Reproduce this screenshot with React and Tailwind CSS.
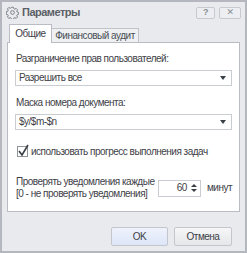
import React from 'react';

const font = { fontFamily: '"Liberation Sans", "DejaVu Sans", sans-serif' };

const GearIcon = () => (
  <svg width="13" height="13" viewBox="0 0 16 16" className="text-[#7a7f87]">
    <path
      fill="none"
      stroke="currentColor"
      strokeWidth="1.2"
      d="M6.8 1.5h2.4l.4 1.8 1.3.6 1.6-1 1.7 1.7-1 1.6.6 1.3 1.8.4v2.4l-1.8.4-.6 1.3 1 1.6-1.7 1.7-1.6-1-1.3.6-.4 1.8H6.8l-.4-1.8-1.3-.6-1.6 1-1.7-1.7 1-1.6-.6-1.3-1.8-.4V6.8l1.8-.4.6-1.3-1-1.6 1.7-1.7 1.6 1 1.3-.6z"
    />
    <circle cx="8" cy="8" r="2.3" fill="none" stroke="currentColor" strokeWidth="1.2" />
  </svg>
);

const Select = ({ value }) => (
  <div className="flex items-center justify-between h-[16px] border border-[#c9ccd1] bg-white pl-[3px] pr-[5px]">
    <span>{value}</span>
    <span className="w-0 h-0 border-l-[3px] border-r-[3px] border-t-[4px] border-l-transparent border-r-transparent border-t-[#3a3f46]" />
  </div>
);

export default function App() {
  return (
    <div
      className="w-[247px] h-[253px] bg-[#e9eaee] border-[2px] border-[#b4b8be] flex flex-col text-[10px] tracking-[-0.5px] text-[#3e4147] leading-none"
      style={font}
    >
      <div className="flex items-center h-[21px] pl-[4px] pr-[4px]">
        <GearIcon />
        <span className="ml-[3px] font-bold text-[11px] text-[#5b5f66]">Параметры</span>
        <div className="ml-auto flex gap-[4px]">
          <div className="w-[19px] h-[12px] rounded-[2px] border border-[#c6c9ce] bg-[#eceef1] flex items-center justify-center text-[9px] font-bold text-[#8a8e95]">?</div>
          <div className="w-[22px] h-[12px] rounded-[2px] border border-[#c6c9ce] bg-[#eceef1] flex items-center justify-center text-[9px] font-bold text-[#8a8e95]">✕</div>
        </div>
      </div>

      <div className="flex items-end pl-[7px] h-[19px]">
        <div className="h-[19px] w-[43px] bg-white border border-b-0 border-[#b9bdc3] flex items-center justify-center relative top-[1px]">Общие</div>
        <div className="h-[14px] w-[87px] bg-[#eef0f2] border border-l-0 border-b-0 border-[#c1c4c9] flex items-center justify-center text-[#4a4e55]">Финансовый аудит</div>
      </div>

      <div className="mx-[5px] h-[170px] bg-white border border-[#b9bdc3] px-[7px] pt-[11px] flex flex-col">
        <div className="pl-[1px]">Разграничение прав пользователей:</div>
        <div className="mt-[6px]"><Select value="Разрешить все" /></div>
        <div className="mt-[12px] pl-[1px]">Маска номера документа:</div>
        <div className="mt-[6px]"><Select value="$y/$m-$n" /></div>
        <div className="mt-[16px] flex items-center pl-[2px]">
          <span className="w-[11px] h-[11px] shrink-0 border border-[#8f949b] bg-white relative">
            <svg width="13" height="13" viewBox="0 0 13 13" className="absolute left-[-1px] top-[-3px]">
              <path d="M2 7l3 4 6-10" fill="none" stroke="#3a3f46" strokeWidth="1.6" />
            </svg>
          </span>
          <span className="ml-[3px] whitespace-nowrap">использовать прогресс выполнения задач</span>
        </div>
        <div className="mt-[20px] flex items-center">
          <div className="flex flex-col gap-[2px] pl-[1px] whitespace-nowrap">
            <span>Проверять уведомления каждые</span>
            <span>[0 - не проверять уведомления]</span>
          </div>
          <div className="ml-auto flex items-center shrink-0">
            <div className="w-[43px] h-[17px] border border-[#c9ccd1] flex items-center justify-end pr-[3px] gap-[4px]">
              <span>60</span>
              <span className="flex flex-col gap-[2px]">
                <span className="w-0 h-0 border-l-[3px] border-r-[3px] border-b-[3px] border-l-transparent border-r-transparent border-b-[#3a3f46]" />
                <span className="w-0 h-0 border-l-[3px] border-r-[3px] border-t-[3px] border-l-transparent border-r-transparent border-t-[#3a3f46]" />
              </span>
            </div>
            <span className="ml-[6px]">минут</span>
          </div>
        </div>
      </div>

      <div className="flex justify-end gap-[6px] pr-[13px] mt-[15px]">
        <div className="w-[57px] h-[19px] rounded-[2px] border border-[#c3c7cd] bg-gradient-to-b from-[#eef2fb] to-[#dde6f8] flex items-center justify-center">OK</div>
        <div className="w-[58px] h-[19px] rounded-[2px] border border-[#c3c7cd] bg-gradient-to-b from-[#f6f6f7] to-[#e6e7ea] flex items-center justify-center">Отмена</div>
      </div>
    </div>
  );
}
